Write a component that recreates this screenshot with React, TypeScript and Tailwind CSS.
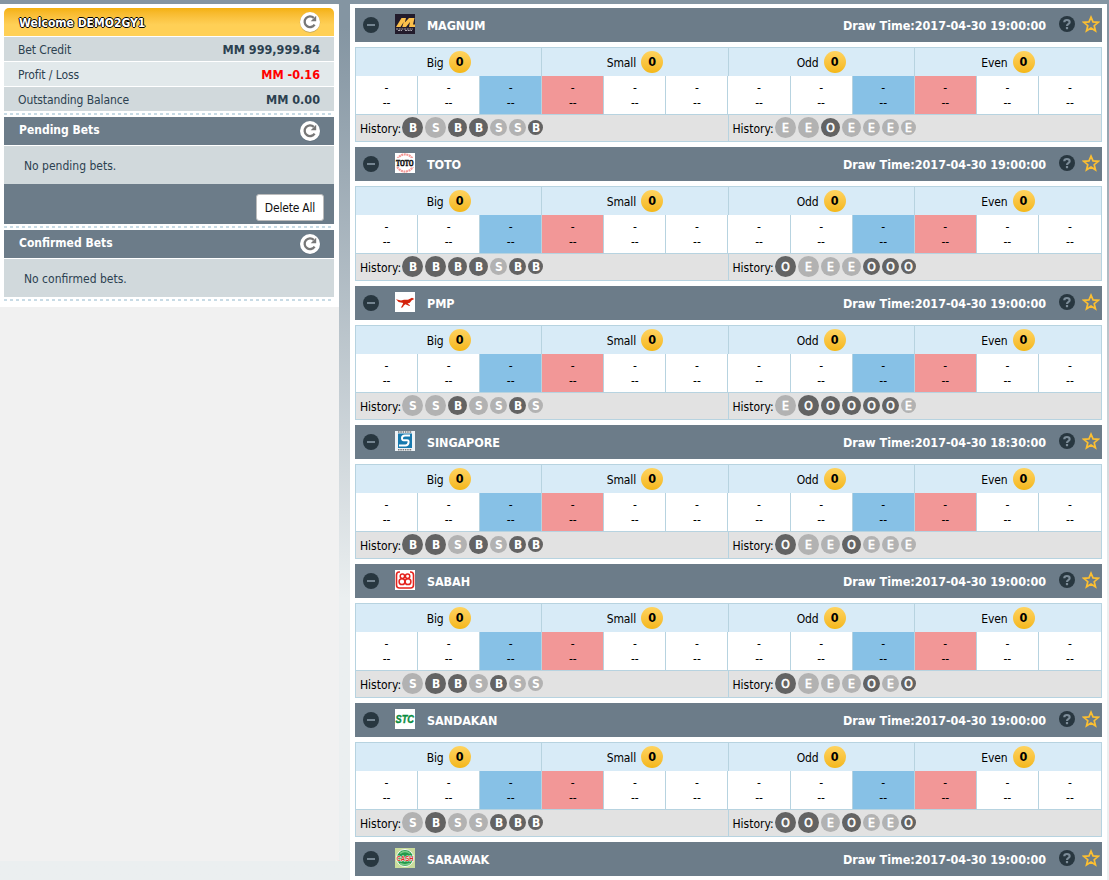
import type { ReactNode } from "react";

const FONT = "font-['DejaVu_Sans_Condensed','DejaVu_Sans',sans-serif]";

type Game = { name: string; time: string; left: string; right: string; logo: ReactNode };

const logos: Record<string, ReactNode> = {
  MAGNUM: (
    <>
      <rect width="20" height="20" fill="#221b2b" />
      <path d="M1 13 6.500 4H11L9.800 8.500 14 4h5.500L18 10.500h2V13h-6l1-5-4 5H7.200l1.500-5L5.500 13z" fill="#fbc04b" />
      <path d="M1 15h17M3 16.500h4m3 0h7" stroke="#aaa5ad" strokeDasharray="2 .7" />
    </>
  ),
  TOTO: (
    <>
      <rect width="20" height="20" fill="#fff" />
      <circle cx="10" cy="10" r="8.600" fill="none" stroke="#f49a98" strokeWidth="2.200" strokeDasharray="2 .6" />
      <rect y="5" width="20" height="9" fill="#fff" />
      <text transform="scale(1 1.35)" x="1" y="9.400" fontSize="6.200" fontWeight="bold" fontFamily="Liberation Serif" fill="#111" stroke="#111" strokeWidth=".4">TOTO</text>
    </>
  ),
  PMP: (
    <>
      <rect width="20" height="20" fill="#fff" />
      <path d="M1 7.200 6 8.500l3-.8 4 .1 4-2 2.300 1.200-2.500 1.200-2 2.600-2.300.6 2.500 1.800-.6.900-4-1.900-1.600 1.200-1 1.900-2 .4 1.600-2.800.8-2-4.500-1z" fill="#d3230c" />
    </>
  ),
  SINGAPORE: (
    <>
      <rect width="20" height="20" fill="#eef3f7" />
      <path d="M3 1h14M3 18.700h14" stroke="#777" strokeWidth="1.600" strokeDasharray="1.500 .8" />
      <rect x="3" y="2.500" width="14" height="14.500" fill="#1679ae" />
      <path d="M15 4.500H10Q7 4.500 7 7t2 2.200h3q2 0 1.500 2.500T10.500 14.500H4" fill="none" stroke="#fff" strokeWidth="2" />
    </>
  ),
  SABAH: (
    <>
      <rect width="20" height="20" fill="#fff" />
      <path d="M5 2H4Q1.500 2 1.500 5v10q0 3 3 3h11q3 0 3-3V5q0-3-3-3H15M5 18h10" fill="none" stroke="#e4231d" strokeWidth="1.600" />
      <g fill="none" stroke="#e4231d" strokeWidth="1.500">
        <circle cx="7.400" cy="6.300" r="2.200" /><circle cx="12.600" cy="6.300" r="2.200" />
        <circle cx="7" cy="11.700" r="2.900" /><circle cx="13" cy="11.700" r="2.900" />
      </g>
    </>
  ),
  SANDAKAN: (
    <>
      <rect width="20" height="20" fill="#fff" />
      <text x="0.500" y="14" fontSize="10.500" fontWeight="bold" fontStyle="italic" fontFamily="Liberation Sans" textLength="18.500" lengthAdjust="spacingAndGlyphs" fill="#0b8c3f" stroke="#0b8c3f" strokeWidth=".4">STC</text>
    </>
  ),
  SARAWAK: (
    <>
      <rect width="20" height="20" fill="#c9dc9c" />
      <circle cx="10" cy="10" r="8.500" fill="#249a4b" stroke="#fff" />
      <path d="M5 5.500q5-4 10 0M5 15.500q5 2.500 10 0" stroke="#7ccc8a" strokeWidth="1.500" fill="none" />
      <text transform="scale(1 1.3)" x="1.500" y="9.900" fontSize="6" fontWeight="bold" fontFamily="Liberation Sans" fill="#e22a22" stroke="#fff" strokeWidth=".8" paintOrder="stroke">CASH</text>
    </>
  ),
};

const games: Game[] = [
  ["MAGNUM", "19:00:00", "BSBBSSB", "EEOEEEE"],
  ["TOTO", "19:00:00", "BBBBSBB", "OEEEOOO"],
  ["PMP", "19:00:00", "SSBSSBS", "EOOOOOE"],
  ["SINGAPORE", "18:30:00", "BBSBSBB", "OEEOEEE"],
  ["SABAH", "19:00:00", "SBBSBSS", "OEEEOEO"],
  ["SANDAKAN", "19:00:00", "SBSSBBB", "OOEOEEO"],
  ["SARAWAK", "19:00:00", "", ""],
].map(([name, time, left, right]) => ({ name, time, left, right, logo: logos[name] }));

function Refresh() {
  return (
    <svg viewBox="0 0 22 22" className="size-[22px] shrink-0">
      <circle cx="11" cy="11.500" r="10.200" fill="#4b5a66" opacity=".35" />
      <circle cx="11" cy="11" r="10" fill="#fff" />
      <path d="M15.600 13.600A5.400 5.400 0 1 1 14.800 6.800" fill="none" stroke="#777" strokeWidth="2.300" />
      <path d="M17.200 4.800v5.400h-5.500z" fill="#777" />
    </svg>
  );
}

function Divider() {
  return (
    <div className="flex h-[6px] items-center">
      <svg className="h-[2px] w-[330px]">
        <path d="M0 1H330" stroke="#c8dbe5" strokeWidth="2" strokeDasharray="3 3" />
      </svg>
    </div>
  );
}

function Balance({ label, value, tone }: { label: string; value: string; tone: string }) {
  return (
    <div className={`mt-px flex h-6 items-center justify-between pt-px pr-[14px] pl-[14px] text-[12px] ${tone}`}>
      <span className="tracking-[-0.1px] text-[#2c4150]">{label}</span>
      <span className="pt-px text-[12.500px] font-bold">{value}</span>
    </div>
  );
}

function PanelHead({ title }: { title: string }) {
  return (
    <div className="flex h-7 items-center justify-between bg-[#6c7c89] pr-[13px] pl-[15px]">
      <span className="-mt-[3px] text-[12px] font-bold text-white">{title}</span>
      <Refresh />
    </div>
  );
}

function Sidebar() {
  return (
    <aside className="h-[857px] w-[339px] shrink-0 bg-[#f1f1f1]">
      <div className="h-[303px] rounded-tr-[3px] bg-white pt-1 pr-[5px] pl-1">
        <div className="flex h-7 items-center justify-between rounded-t-[5px] bg-linear-to-b from-[#f4b10b] to-[#ffd056] to-60% pr-[13px] pl-[15px]">
          <span className="pt-px text-[12px] font-bold text-white [text-shadow:1px_0_#000,-1px_0_#000,0_1px_#000,0_-1px_#000]">Welcome DEMO2GY1</span>
          <Refresh />
        </div>
        <Balance label="Bet Credit" value="MM 999,999.84" tone="bg-[#d1d9dc] text-[#2c4150]" />
        <Balance label="Profit / Loss" value="MM -0.16" tone="bg-[#e2e9eb] text-[#ff0000]" />
        <Balance label="Outstanding Balance" value="MM 0.00" tone="bg-[#d1d9dc] text-[#2c4150]" />
        <Divider />
        <PanelHead title="Pending Bets" />
        <div className="mt-px flex h-[38px] items-center bg-[#d1d9dc] pt-[2px] pl-5 text-[12px] text-[#2c4150]">No pending bets.</div>
        <div className="flex h-10 items-end justify-end bg-[#6c7c89] pr-[10px] pb-[3px]">
          <button className="h-[27px] w-[68px] rounded-[3px] border border-[#bbb] bg-white text-[12px] tracking-[-0.2px] text-[#111]">Delete All</button>
        </div>
        <Divider />
        <PanelHead title="Confirmed Bets" />
        <div className="mt-px flex h-[38px] items-center bg-[#d1d9dc] pt-[2px] pl-5 text-[12px] text-[#2c4150]">No confirmed bets.</div>
        <Divider />
      </div>
    </aside>
  );
}

function GameHead({ game }: { game: Game }) {
  return (
    <div className="flex h-[34px] shrink-0 items-center bg-[#6c7c89] text-[12.500px] font-bold text-white">
      <svg viewBox="0 0 16 16" className="ml-2 size-4">
        <circle cx="8" cy="8" r="8" fill="#283740" />
        <path d="M4 8h8" stroke="#758591" strokeWidth="2" />
      </svg>
      <svg viewBox="0 0 20 20" className="-mt-[2px] ml-4 size-5">{game.logo}</svg>
      <span className="ml-3 pt-[2px] tracking-[-0.1px]">{game.name}</span>
      <span className="ml-auto pt-[2px] tracking-[-0.03px]">Draw Time:2017-04-30 {game.time}</span>
      <svg viewBox="0 0 16 16" className="-mt-[2px] ml-[13px] size-4">
        <circle cx="8" cy="8" r="8" fill="#283740" />
        <path d="M5.300 6.200Q5.300 4 8 4t2.600 2.200Q10.600 7.300 9.200 8.100 8 8.800 8 10" fill="none" stroke="#7c8c98" strokeWidth="2.200" />
        <path d="M6.900 11h2.200v2.200H6.900z" fill="#7c8c98" />
      </svg>
      <svg viewBox="0 0 18 18" className="-mt-[2px] mr-[2px] ml-[7px] size-[18px]">
        <path d="M9 2.200l2 4.700 5.200.4-4 3.400 1.300 5.100L9 13l-4.500 2.800 1.300-5.100-4-3.400L7 6.900z" fill="none" stroke="#fcbf31" strokeWidth="1.700" />
      </svg>
    </div>
  );
}

const ballSizes = [
  "size-[21px] ml-px",
  "size-[21px] ml-[2px]",
  "size-[19px] ml-[2px]",
  "size-[19px] ml-[2px]",
  "size-[17px] ml-[2px]",
  "size-[17px] ml-[2px]",
  "size-[15px] ml-[2px]",
];

function History({ marks }: { marks: string }) {
  return (
    <div className="flex h-[26px] items-center pl-1 text-[12px] text-black">
      <span className="w-[41px] pt-px whitespace-nowrap">History:</span>
      {marks.split("").map((m, i) => (
        <span key={i} className={`-mt-[2px] flex shrink-0 items-center justify-center rounded-full pt-px pl-px leading-none text-white ${m === "B" || m === "S" ? "font-bold" : "font-medium [-webkit-text-stroke:0.6px_#fff]"} ${ballSizes[i]} ${m === "B" || m === "O" ? "bg-[#636363]" : "bg-[#b2b2b2]"}`}>{m}</span>
      ))}
    </div>
  );
}

function Board({ game }: { game: Game }) {
  return (
    <div className="my-[5px] h-[95px] shrink-0 border border-[#b7d3e0] bg-white text-[12px] text-black">
      <div className="grid h-7 grid-cols-4 divide-x divide-[#b7d3e0] bg-[#d8ebf7]">
        {["Big", "Small", "Odd", "Even"].map((t) => (
          <div key={t} className="flex items-center justify-center gap-[5px]">
            <span className="pt-px tracking-[-0.1px]">{t}</span>
            <span className="flex size-[22px] items-center justify-center rounded-full bg-linear-to-b from-[#ffd35d] to-[#f4b714] pt-px text-[12.500px] font-bold">0</span>
          </div>
        ))}
      </div>
      <div className="grid h-[38px] grid-cols-12 divide-x divide-[#b7d3e0]">
        {Array.from({ length: 12 }, (_, i) => (
          <div key={i} className={`flex flex-col items-center pt-[5px] leading-[15px] ${i % 6 === 2 ? "bg-[#87c1e6]" : i % 6 === 3 ? "bg-[#f29797]" : ""}`}>
            <span>-</span>
            <span>--</span>
          </div>
        ))}
      </div>
      <div className="grid h-[27px] grid-cols-2 divide-x divide-[#b7d3e0] border-t border-[#b7d3e0] bg-[#e2e2e2]">
        <History marks={game.left} />
        <History marks={game.right} />
      </div>
    </div>
  );
}

export default function App() {
  return (
    <div className={`flex h-[880px] w-[1109px] overflow-hidden bg-[#ebeff0] bg-linear-to-b from-[#8495a2] from-3% to-[#ebeff0] to-68% pt-1 ${FONT}`}>
      <Sidebar />
      <main className="ml-[11px] flex h-[876px] w-[757px] flex-col overflow-hidden bg-white px-[5px] pt-1">
        {games.map((g) => (
          <div key={g.name} className="shrink-0">
            <GameHead game={g} />
            {g.left && <Board game={g} />}
          </div>
        ))}
      </main>
    </div>
  );
}
